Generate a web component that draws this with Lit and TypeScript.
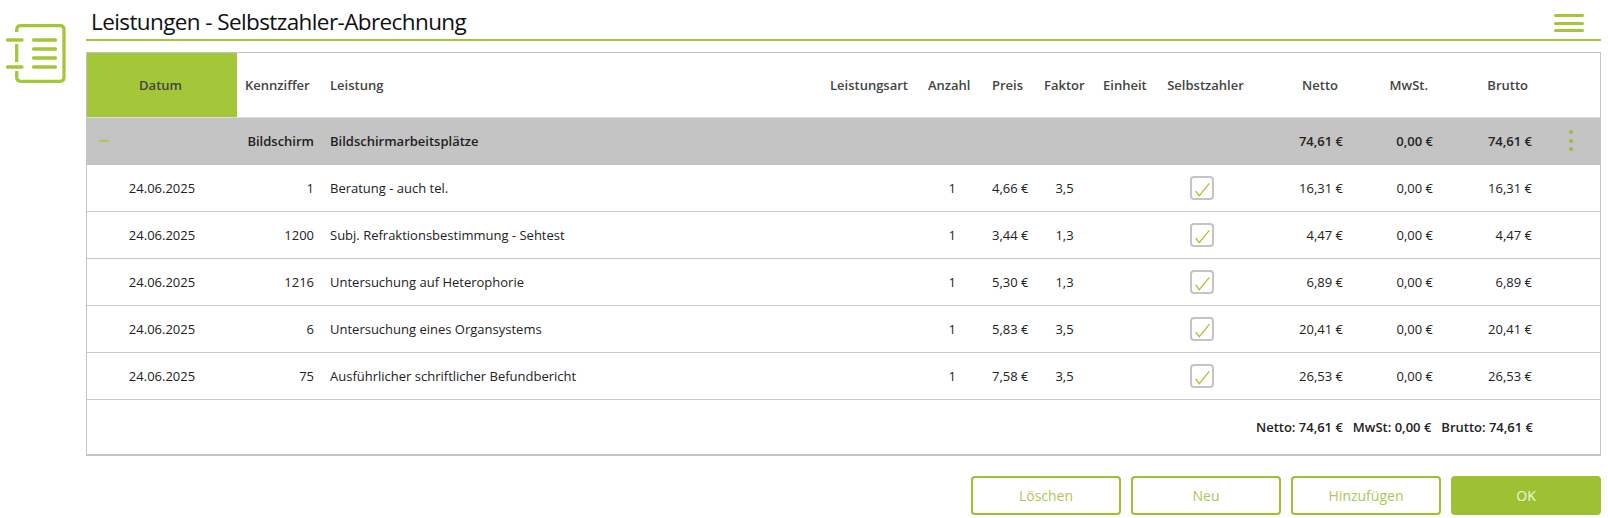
import { LitElement, html, css } from "lit";
import { customElement } from "lit/decorators.js";

const rows = [
  ["24.06.2025", "1", "Beratung - auch tel.", "1", "4,66 €", "3,5", "16,31 €", "0,00 €", "16,31 €"],
  ["24.06.2025", "1200", "Subj. Refraktionsbestimmung - Sehtest", "1", "3,44 €", "1,3", "4,47 €", "0,00 €", "4,47 €"],
  ["24.06.2025", "1216", "Untersuchung auf Heterophorie", "1", "5,30 €", "1,3", "6,89 €", "0,00 €", "6,89 €"],
  ["24.06.2025", "6", "Untersuchung eines Organsystems", "1", "5,83 €", "3,5", "20,41 €", "0,00 €", "20,41 €"],
  ["24.06.2025", "75", "Ausführlicher schriftlicher Befundbericht", "1", "7,58 €", "3,5", "26,53 €", "0,00 €", "26,53 €"],
];

@customElement("app-root")
export class AppRoot extends LitElement {
  static styles = css`
    :host { display: block; width: 1608px; height: 518px; overflow: hidden; background: #fff; font-family: "Open Sans", "Noto Sans", sans-serif; color: #222; font-size: 13px; }
    .page { display: grid; grid-template-columns: 86px 1515px; }
    .side svg { display: block; }
    .head { display: flex; justify-content: space-between; align-items: flex-start; height: 39px; border-bottom: 2px solid #a4c639; }
    .title { font-size: 22.5px; line-height: 30px; padding: 7px 0 0 5px; color: #111; letter-spacing: -0.6px; }
    .burger { margin: 14px 17px 0 0; width: 30px; display: grid; gap: 4.5px; }
    .burger i { display: block; height: 3px; background: #a4c639; border-radius: 2px; }
    .table { margin-top: 11px; border: 1px solid #c4c4c4; border-bottom-width: 2px; height: 404px; box-sizing: border-box; }
    .row { display: grid; grid-template-columns: 150px 83px 500px 98px 64px 52px 59px 64px 97px 99px 90px 99px 1fr; align-items: center; height: 47px; border-bottom: 1px solid #c8c8c8; box-sizing: border-box; }
    .row > span { padding: 0 10px; white-space: nowrap; text-align: right; }
    .row > span:nth-child(2) { padding: 0 6px 0 8px; }
    .row > span:nth-child(5) { padding-right: 26px; }
    .row > span:nth-child(6) { padding-right: 6px; }
    .row > span:nth-child(7) { padding-left: 12px; }
    .row > span.l { text-align: left; }
    .row > span.c { text-align: center; }
    .row.h { height: 65px; font-weight: 600; color: #444; border-bottom: 1px solid #dcdcdc; }
    .row.h > span { text-align: left; padding-left: 10px; }
    .row.h > span:nth-child(2) { padding-left: 8px; }
    .row.h > span.c { text-align: center; padding: 0; }
    .row.h > span.r { text-align: right; padding-right: 15px; }
    .row.h > span.r.last { padding-right: 14px; }
    .row.g { background: #c4c4c4; font-weight: 600; border: 0; color: #222; padding-bottom: 2px; }
    .row.h > span.dat { background: #a4c639; align-self: stretch; display: flex; align-items: center; justify-content: center; padding: 0 3px 0 0; color: #444; }
    .minus { width: 10px; border-top: 2px solid #a9c85a; margin: 0 0 0 2px; }
    .dots { display: grid; gap: 4.5px; justify-content: center; }
    .dots i { width: 4px; height: 4px; border-radius: 50%; background: #9dc133; display: block; }
    .check { display: inline-flex; width: 24px; height: 24px; margin-right: 7px; box-sizing: border-box; border: 2px solid #c4c4c4; border-radius: 4px; vertical-align: middle; }
    .check svg { display: block; }
    .sum { display: flex; justify-content: flex-end; align-items: center; gap: 10px; height: 54px; padding-right: 67px; font-weight: 600; }
    .btns { display: flex; justify-content: flex-end; gap: 10px; margin-top: 20px; }
    .btn { width: 150px; height: 39px; box-sizing: border-box; border: 2px solid #9dc133; border-radius: 4px; display: flex; align-items: center; justify-content: center; font-size: 14px; color: #a9c85a; }
    .btn.ok { background: #9dc133; color: #f2f7e0; }
  `;
  render() {
    return html`<div class="page">
      <div class="side">
        <svg width="86" height="90" viewBox="0 0 86 90" fill="none" stroke="#a4c639" stroke-width="3.300" stroke-linecap="round">
          <path d="M16.700 32V30Q16.700 25.700 21 25.700H60Q64 25.700 64 30V77Q64 81.300 60 81.300H21Q16.700 81.300 16.700 77V71" stroke-linecap="butt"/>
          <path d="M16.700 44V62" stroke-linecap="butt"/>
          <path d="M7.500 40H22M7.500 67H22M33.500 40H55.500M33.500 49H55.500M33.500 58H55.500M33.500 67H55.500"/>
        </svg>
      </div>
      <div>
        <div class="head"><div class="title">Leistungen - Selbstzahler-Abrechnung</div><div class="burger"><i></i><i></i><i></i></div></div>
        <div class="table">
          <div class="row h">
            <span class="dat">Datum</span><span>Kennziffer</span><span>Leistung</span><span>Leistungsart</span><span>Anzahl</span><span>Preis</span><span>Faktor</span><span>Einheit</span><span class="c">Selbstzahler</span><span class="r">Netto</span><span class="r">MwSt.</span><span class="r last">Brutto</span><span></span>
          </div>
          <div class="row g">
            <span class="l"><div class="minus"></div></span><span>Bildschirm</span><span class="l">Bildschirmarbeitsplätze</span><span></span><span></span><span></span><span></span><span></span><span></span><span>74,61 €</span><span>0,00 €</span><span>74,61 €</span><span><div class="dots"><i></i><i></i><i></i></div></span>
          </div>
          ${rows.map((r) => html`<div class="row">
            <span class="c">${r[0]}</span><span>${r[1]}</span><span class="l">${r[2]}</span><span></span><span>${r[3]}</span><span>${r[4]}</span><span class="c">${r[5]}</span><span></span>
            <span class="c"><span class="check"><svg width="20" height="20" viewBox="0 0 20 20" fill="none" stroke="#a4c639" stroke-width="1.300"><path d="M3.700 13L7.300 17.700L17.300 5.300"/></svg></span></span>
            <span>${r[6]}</span><span>${r[7]}</span><span>${r[8]}</span><span></span>
          </div>`)}
          <div class="sum"><span>Netto: 74,61 €</span><span>MwSt: 0,00 €</span><span>Brutto: 74,61 €</span></div>
        </div>
        <div class="btns"><div class="btn">Löschen</div><div class="btn">Neu</div><div class="btn">Hinzufügen</div><div class="btn ok">OK</div></div>
      </div>
    </div>`;
  }
}
